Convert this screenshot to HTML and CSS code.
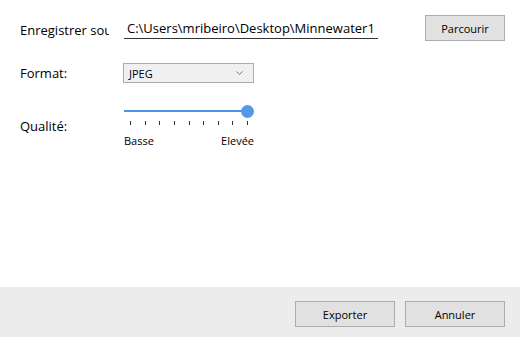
FILE: index.html
```html
<!DOCTYPE html>
<html lang="fr">
<head>
<meta charset="utf-8">
<title>Exporter</title>
<link rel="stylesheet" href="styles.css">
</head>
<body>
<div class="dialog">
  <main class="content">
    <div class="row row-path">
      <label class="label label-clip">Enregistrer sous</label>
      <div class="textbox">C:\Users\mribeiro\Desktop\Minnewater1</div>
      <button class="btn btn-browse">Parcourir</button>
    </div>
    <div class="row row-format">
      <label class="label">Format:</label>
      <div class="combo">
        <span class="combo-value">JPEG</span>
        <svg class="chevron" width="7" height="4" viewBox="0 0 7 4"><path d="M0.5 0.5 L3.5 3.5 L6.5 0.5" fill="none" stroke="#777" stroke-width="1"/></svg>
      </div>
    </div>
    <div class="row row-quality">
      <label class="label">Qualité:</label>
      <div class="slider">
        <div class="track-area">
          <div class="track"></div>
          <div class="thumb"></div>
        </div>
        <div class="ticks">
          <span></span><span></span><span></span><span></span><span></span><span></span><span></span><span></span><span></span>
        </div>
        <div class="slider-labels">
          <span>Basse</span>
          <span>Elevée</span>
        </div>
      </div>
    </div>
  </main>
  <footer class="footer">
    <button class="btn btn-footer">Exporter</button>
    <button class="btn btn-footer">Annuler</button>
  </footer>
</div>
</body>
</html>
```
FILE: styles.css
```css
* { box-sizing: border-box; }
html, body { margin: 0; padding: 0; background: #ffffff; }
body {
  font-family: "Open Sans", "Noto Sans", sans-serif;
  font-size: 13px;
  color: #000;
}
.dialog {
  width: 520px;
  height: 337px;
  display: flex;
  flex-direction: column;
}
.content {
  flex: 1;
  padding: 15px 15px 0 20px;
}
.row { display: flex; }
.label {
  width: 104px;
  flex: none;
  font-size: 13px;
  line-height: 17px;
  white-space: nowrap;
}
.label-clip {
  width: 89px;
  margin-right: 15px;
  overflow: hidden;
}
.row-path {
  height: 26px;
  align-items: flex-start;
}
.row-path .label { padding-top: 7px; }
.textbox {
  width: 254px;
  height: 24px;
  border-bottom: 1px solid #333;
  padding: 5px 0 0 3px;
  line-height: 17px;
  font-size: 13px;
  white-space: nowrap;
  overflow: hidden;
}
.btn {
  font-family: inherit;
  font-size: 11px;
  color: #000;
  background: #e1e1e1;
  border: 1px solid #adadad;
  height: 26px;
  padding: 0;
}
.btn-browse {
  width: 80px;
  margin-left: 47px;
}
.row-format {
  margin-top: 22px;
  align-items: center;
}
.combo {
  width: 131px;
  height: 20px;
  margin-left: -1px;
  border: 1px solid #acacac;
  background: #f0f0f0;
  display: flex;
  align-items: center;
  justify-content: space-between;
  padding: 0 10px 0 5px;
  font-size: 11px;
}
.chevron { display: block; margin-top: -1px; }
.row-quality {
  margin-top: 22px;
  align-items: center;
}
.row-quality .label { margin-top: 0; }
.slider {
  width: 130px;
  display: flex;
  flex-direction: column;
}
.track-area {
  position: relative;
  height: 13px;
}
.track {
  margin-top: 5px;
  height: 2px;
  width: 124px;
  background: #4f93e3;
}
.thumb {
  position: absolute;
  left: 117px;
  top: 0;
  width: 13px;
  height: 13px;
  border-radius: 50%;
  background: #5599e6;
}
.ticks {
  display: flex;
  justify-content: space-between;
  padding: 0 6px 0 6px;
  margin-top: 3px;
  height: 4px;
}
.ticks span {
  width: 1px;
  height: 4px;
  background: #333;
}
.slider-labels {
  display: flex;
  justify-content: space-between;
  margin-top: 9px;
  font-size: 11px;
  line-height: 14px;
}
.footer {
  height: 50px;
  background: #ececec;
  display: flex;
  justify-content: flex-end;
  gap: 10px;
  padding: 14px 15px 0 0;
}
.btn-footer { width: 100px; }
```
